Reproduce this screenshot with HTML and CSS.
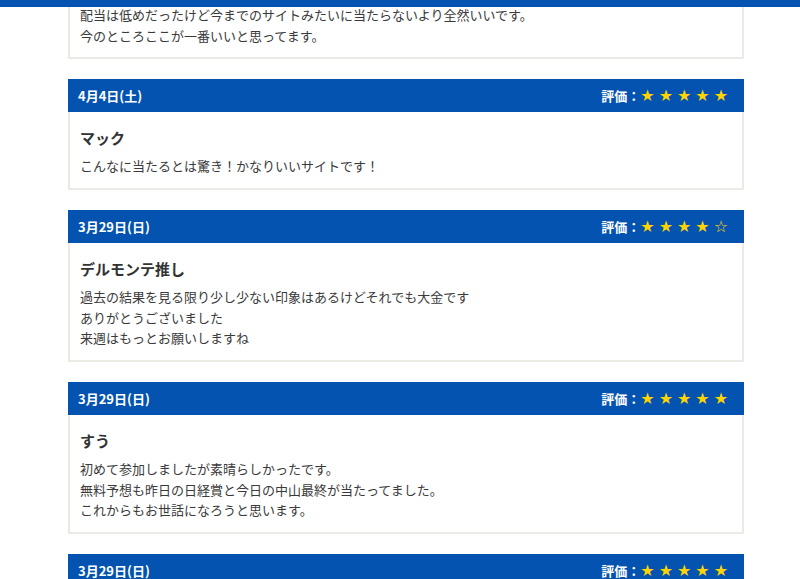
FILE: index.html
```html
<!DOCTYPE html>
<html lang="ja">
<head>
    <meta charset="UTF-8">
    <title>お客様の声</title>
    <link rel="stylesheet" href="styles.css">
</head>
<body>

<div class="topbar"></div>

<div class="reviews">

    <!-- scrolled-off card -->
    <div class="review">
        <div class="review-body review-body-cut">
            <p class="review-text">配当は低めだったけど今までのサイトみたいに当たらないより全然いいです。<br>今のところここが一番いいと思ってます。</p>
        </div>
    </div>

    <div class="review">
        <div class="review-head">
            <span class="review-date">4月4日(土)</span>
            <span class="review-rate">評価：<span class="stars">★★★★★</span></span>
        </div>
        <div class="review-body">
            <h3 class="review-name">マック</h3>
            <p class="review-text">こんなに当たるとは驚き！かなりいいサイトです！</p>
        </div>
    </div>

    <div class="review">
        <div class="review-head">
            <span class="review-date">3月29日(日)</span>
            <span class="review-rate">評価：<span class="stars">★★★★☆</span></span>
        </div>
        <div class="review-body">
            <h3 class="review-name">デルモンテ推し</h3>
            <p class="review-text">過去の結果を見る限り少し少ない印象はあるけどそれでも大金です<br>ありがとうございました<br>来週はもっとお願いしますね</p>
        </div>
    </div>

    <div class="review">
        <div class="review-head">
            <span class="review-date">3月29日(日)</span>
            <span class="review-rate">評価：<span class="stars">★★★★★</span></span>
        </div>
        <div class="review-body">
            <h3 class="review-name">すう</h3>
            <p class="review-text">初めて参加しましたが素晴らしかったです。<br>無料予想も昨日の日経賞と今日の中山最終が当たってました。<br>これからもお世話になろうと思います。</p>
        </div>
    </div>

    <div class="review">
        <div class="review-head">
            <span class="review-date">3月29日(日)</span>
            <span class="review-rate">評価：<span class="stars">★★★★★</span></span>
        </div>
        <div class="review-body">
            <h3 class="review-name">たけし</h3>
            <p class="review-text">今回も的中させてもらいました。</p>
        </div>
    </div>

</div>

</body>
</html>
```

FILE: styles.css
```css
body {
    margin: 0;
    font-family: "Noto Sans CJK JP", "Noto Sans", sans-serif;
    color: #3a3a3a;
    background: #fff;
    overflow: hidden;
}

.topbar {
    position: fixed;
    top: 0;
    left: 0;
    right: 0;
    height: 7px;
    background: #0453b0;
    z-index: 10;
}

.reviews {
    width: 676px;
    margin: 0 0 0 68px;
    display: flex;
    flex-direction: column;
    gap: 20px;
}

.review-head {
    display: flex;
    justify-content: space-between;
    align-items: center;
    height: 33px;
    padding: 0 12px 0 10px;
    background: #0453b0;
    color: #fff;
    font-size: 13px;
    font-weight: bold;
}

.stars {
    color: #ffd400;
    font-size: 16px;
    letter-spacing: 4px;
    font-family: "DejaVu Sans", sans-serif;
    font-weight: normal;
}

.review-body {
    border: 2px solid #ebebe6;
    border-top: none;
    padding: 14px 10px 11.5px;
}

.review-body-cut {
    padding-top: 5px;
    padding-bottom: 11px;
}

.review-name {
    margin: 0 0 6px;
    font-size: 15px;
    line-height: 24px;
    font-weight: bold;
    color: #333;
}

.review-text {
    margin: 0;
    font-size: 13px;
    line-height: 20.5px;
}
```
